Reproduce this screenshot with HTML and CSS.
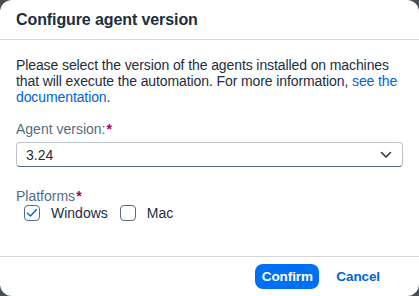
FILE: index.html
```html
<!DOCTYPE html>
<html>
<head>
<meta charset="utf-8">
<link rel="stylesheet" href="styles.css">
</head>
<body>
<div class="dialog">
  <header class="header">
    <h1 class="title">Configure agent version</h1>
  </header>
  <main class="content">
    <p class="intro">Please select the version of the agents installed on machines that will execute the automation. For more information, <a class="link" href="#">see the documentation</a>.</p>
    <div class="field">
      <label class="label">Agent version:<span class="req">*</span></label>
      <div class="select">
        <span class="select-value">3.24</span>
        <svg class="chev" width="12" height="8" viewBox="0 0 12 8"><path d="M1.5 1.5 L6 6 L10.5 1.5" fill="none" stroke="#32363a" stroke-width="1.6" stroke-linecap="round" stroke-linejoin="round"/></svg>
      </div>
    </div>
    <div class="field platforms">
      <label class="label">Platforms<span class="req">*</span></label>
      <div class="checks">
        <span class="check">
          <span class="box checked">
            <svg width="12" height="10" viewBox="0 0 12 10"><path d="M1.5 5.2 L4.5 8 L10.5 1.5" fill="none" stroke="#0064d9" stroke-width="1.4" stroke-linecap="round" stroke-linejoin="round"/></svg>
          </span>
          <span class="check-text">Windows</span>
        </span>
        <span class="check">
          <span class="box"></span>
          <span class="check-text">Mac</span>
        </span>
      </div>
    </div>
  </main>
  <footer class="footer">
    <button class="btn primary">Confirm</button>
    <button class="btn ghost">Cancel</button>
  </footer>
</div>
</body>
</html>
```
FILE: styles.css
```css
* { box-sizing: border-box; }
html, body { margin: 0; height: 100%; }
body {
  background: #4a4f55;
  font-family: "Liberation Sans", Arial, sans-serif;
  color: #1d2d3e;
}
.dialog {
  height: 296px;
  background: #fff;
  border-radius: 12px;
  display: flex;
  flex-direction: column;
}
.header {
  height: 40px;
  border-bottom: 1px solid #d9d9d9;
  padding: 0 16px;
  display: flex;
  align-items: center;
}
.title {
  margin: 0;
  font-size: 16px;
  font-weight: 700;
  color: #1d2d3e;
  letter-spacing: -0.1px;
}
.content {
  flex: 1;
  padding: 17px 16px 0;
}
.intro {
  margin: 0;
  font-size: 14px;
  line-height: 16px;
  color: #1d2d3e;
  letter-spacing: -0.1px;
}
.link { color: #0064d9; text-decoration: none; }
.field { margin-top: 15px; }
.label {
  display: block;
  font-size: 14px;
  line-height: 18px;
  color: #556b82;
  margin-bottom: 4px;
}
.req { color: #a0006e; font-weight: 700; margin-left: 1px; }
.select {
  height: 25px;
  border: 1px solid #bcc3ca;
  border-bottom-color: #556b82;
  border-radius: 4px;
  display: flex;
  align-items: center;
  justify-content: space-between;
  padding: 0 10px 0 9px;
  font-size: 14px;
  color: #1d2d3e;
}
.platforms { margin-top: 20px; }
.platforms .label { margin-bottom: 0; }
.checks { display: flex; align-items: center; gap: 12px; padding-left: 8px; }
.check { display: flex; align-items: center; gap: 11px; font-size: 14px; color: #1d2d3e; }
.box {
  width: 16px; height: 16px;
  border: 1px solid #556b82;
  border-radius: 4px;
  display: flex; align-items: center; justify-content: center;
}
.footer {
  height: 40px;
  border-top: 1px solid #d9d9d9;
  display: flex;
  align-items: center;
  justify-content: flex-end;
  padding: 0 29px 0 0;
  gap: 7px;
}
.btn {
  font-family: inherit;
  font-size: 13.5px;
  font-weight: 700;
  height: 25px;
  border-radius: 8px;
  border: none;
  padding: 0;
  cursor: pointer;
  letter-spacing: -0.1px;
}
.primary { background: #0070f2; color: #fff; width: 64px; }
.ghost { background: transparent; color: #0064d9; padding: 0 10px; }
```
